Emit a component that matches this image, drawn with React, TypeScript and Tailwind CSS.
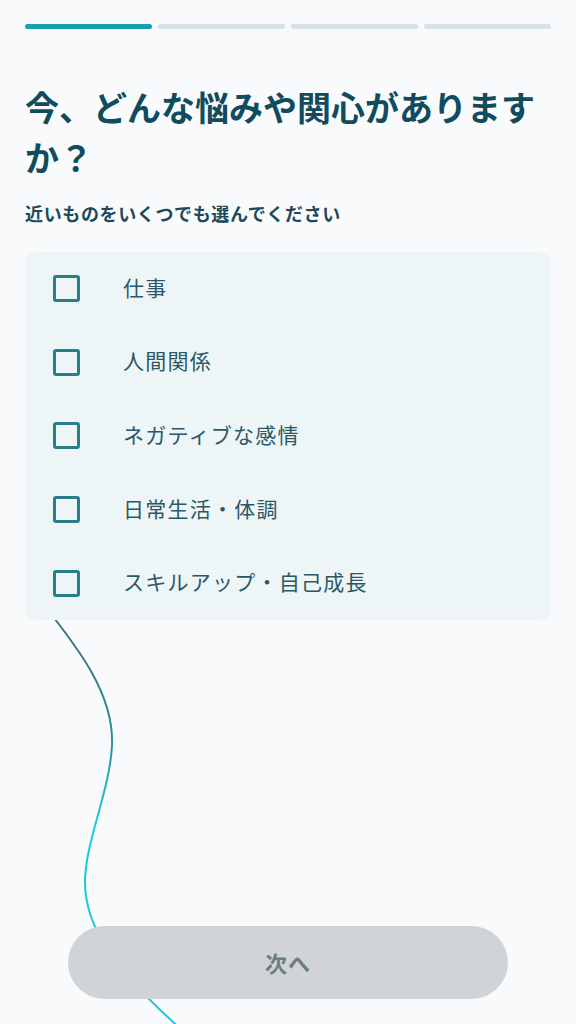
import React, { useState } from "react";

const options = [
  "仕事",
  "人間関係",
  "ネガティブな感情",
  "日常生活・体調",
  "スキルアップ・自己成長",
];

const fontStack = { fontFamily: '"Noto Sans CJK JP", "Noto Sans", sans-serif' };

export default function App() {
  const [checked, setChecked] = useState<string[]>([]);

  const toggle = (label: string) => {
    setChecked((prev) =>
      prev.includes(label) ? prev.filter((l) => l !== label) : [...prev, label]
    );
  };

  return (
    <div
      className="relative min-h-screen bg-[#f8fafb] overflow-hidden flex flex-col px-[25px]"
      style={fontStack}
    >
      {/* decorative line behind the content */}
      <svg
        className="absolute left-0 top-0 pointer-events-none"
        width="576"
        height="1024"
        viewBox="0 0 576 1024"
        fill="none"
      >
        <defs>
          <linearGradient id="wave" x1="0" y1="610" x2="0" y2="820" gradientUnits="userSpaceOnUse">
            <stop offset="0" stopColor="#3a6f7a" />
            <stop offset="0.6" stopColor="#2e8e9c" />
            <stop offset="1" stopColor="#22c7da" />
          </linearGradient>
        </defs>
        <path
          d="M40 600 C 80 650, 114 695, 112 745 C 110 790, 86 840, 85 880 C 84 930, 120 975, 182 1030"
          stroke="url(#wave)"
          strokeWidth="2"
          strokeLinecap="round"
        />
      </svg>

      {/* progress */}
      <div className="relative mt-[24px] flex gap-[6px]">
        <div className="h-[5px] flex-1 rounded-full bg-[#159fb1]" />
        <div className="h-[5px] flex-1 rounded-full bg-[#d5e2e7]" />
        <div className="h-[5px] flex-1 rounded-full bg-[#d5e2e7]" />
        <div className="h-[5px] flex-1 rounded-full bg-[#d5e2e7]" />
      </div>

      <h1 className="relative mt-[53px] text-[34px] leading-[50px] font-bold text-[#114b5e]">
        今、どんな悩みや関心がありますか？
      </h1>
      <p className="relative mt-[19px] text-[18px] leading-[24px] font-bold text-[#1d4a5a] tracking-[0.035em]">
        近いものをいくつでも選んでください
      </p>

      <div className="relative mt-[27px] rounded-[12px] bg-[#edf5f7]">
        {options.map((label) => {
          const on = checked.includes(label);
          return (
            <button
              key={label}
              type="button"
              onClick={() => toggle(label)}
              className="flex h-[73.6px] w-full items-center pl-[28px] text-left"
            >
              <span
                className={
                  "flex h-[27px] w-[27px] shrink-0 items-center justify-center rounded-[3px] border-[3px] border-[#2a7e89] " +
                  (on ? "bg-[#2a7e89]" : "bg-transparent")
                }
              >
                {on && (
                  <svg width="16" height="16" viewBox="0 0 16 16" fill="none">
                    <path d="M3 8.5l3.2 3L13 4.5" stroke="#fff" strokeWidth="2.4" strokeLinecap="round" strokeLinejoin="round" />
                  </svg>
                )}
              </span>
              <span className="ml-[43px] mb-[4px] text-[21px] leading-[28px] tracking-[0.06em] text-[#2c5865]">
                {label}
              </span>
            </button>
          );
        })}
      </div>

      <div className="relative mt-auto flex justify-center pb-[25px]">
        <button
          type="button"
          disabled={checked.length === 0}
          className={
            "h-[73px] w-[440px] rounded-full text-[22px] font-bold tracking-[0.04em] " +
            (checked.length === 0 ? "bg-[#d1d4d6] text-[#6e7d84]" : "bg-[#159fb1] text-white")
          }
        >
          次へ
        </button>
      </div>
    </div>
  );
}
